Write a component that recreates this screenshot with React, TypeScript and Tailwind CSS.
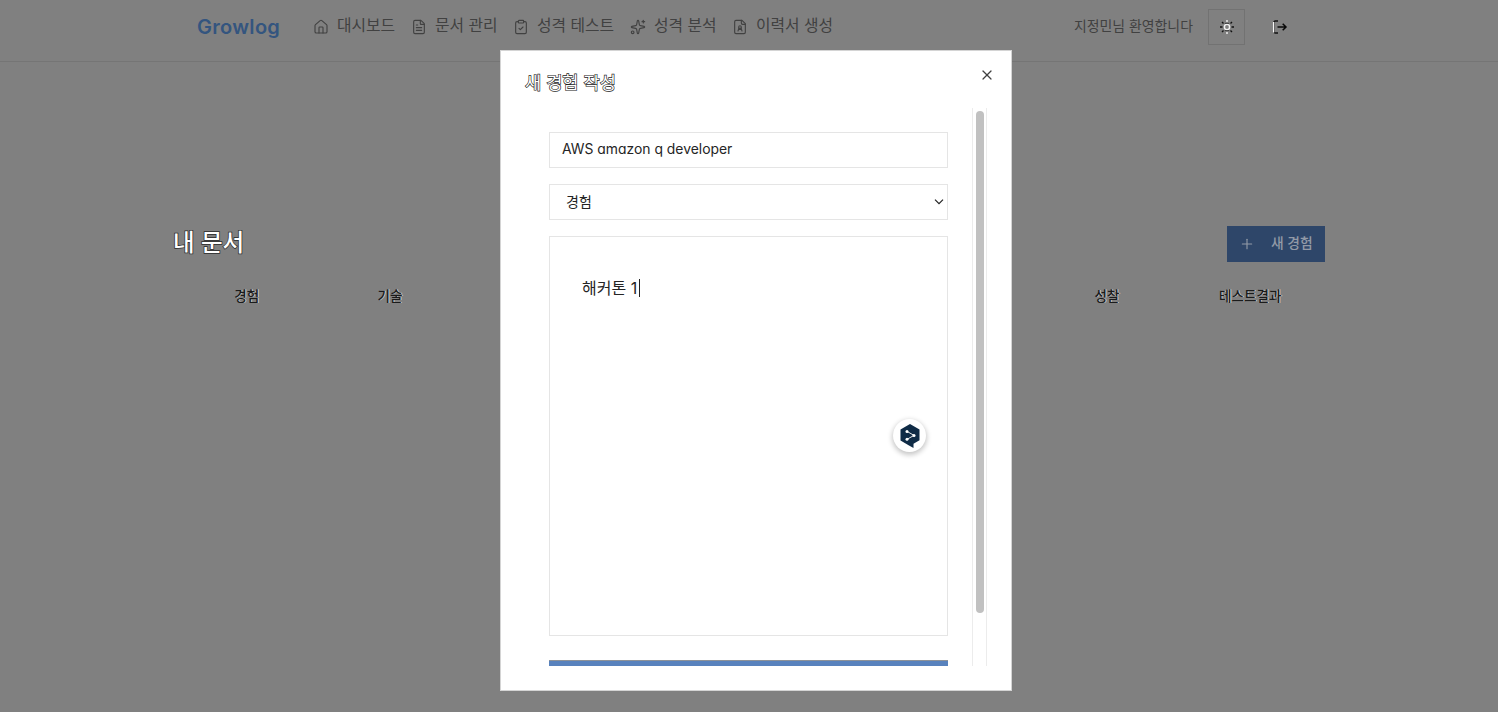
import React from "react";
import { House, FileText, ClipboardCheck, Sparkles, Plus, X } from "lucide-react";

const font = "font-['Inter','Noto_Sans_CJK_KR',sans-serif] [font-feature-settings:'cv11'] antialiased";

function NavItem({ icon, label, className }: { icon: React.ReactNode; label: string; className: string }) {
  return (
    <a className={`flex h-6 shrink-0 items-center gap-2 whitespace-nowrap text-[15.8px] leading-6 text-[#414141] ${className}`}>
      {icon}
      <span className="-mt-0.5">{label}</span>
    </a>
  );
}

function ResumeIcon() {
  return (
    <svg width="16" height="16" viewBox="0 0 24 24" fill="none" stroke="currentColor" strokeWidth="1.7" strokeLinecap="round" strokeLinejoin="round" className="shrink-0">
      <path d="M15 2H6a2 2 0 0 0-2 2v16a2 2 0 0 0 2 2h12a2 2 0 0 0 2-2V7Z" />
      <path d="M14 2v4a2 2 0 0 0 2 2h4" />
      <circle cx="12" cy="12.2" r="2" />
      <path d="M9 18l1.4-4.4M15 18l-1.4-4.4M10 15.8h4" />
    </svg>
  );
}

function SunIcon() {
  return (
    <svg width="16" height="16" viewBox="0 0 16 16" fill="none" strokeWidth="1.4">
      <circle cx="8" cy="8" r="2.6" stroke="#f2f2f2" />
      <path d="M8 1v2M8 13v2" stroke="#f2f2f2" />
      <path d="M1 8h2.5M12.5 8H15M3 3l1.5 1.5M11.5 11.5L13 13M3 13l1.5-1.5M11.5 4.5L13 3" stroke="#111" />
      <path d="M5.8 4.4h4.4M5.8 11.6h4.4" stroke="#222" strokeWidth="0.7" />
    </svg>
  );
}

function LogoutIcon() {
  return (
    <svg width="16" height="16" viewBox="0 0 16 16" fill="none" strokeWidth="1.3" className="ml-[27px] shrink-0">
      <path d="M6 2H3.3Q2 2 2 3.3v9.4Q2 14 3.3 14H6" stroke="#111" />
      <path d="M1.6 3v10.5" stroke="#f5f5f5" />
      <path d="M5.5 8H14M10.7 4.7L14 8l-3.3 3.3" stroke="#080808" strokeWidth="1.5" />
    </svg>
  );
}

function Header() {
  return (
    <header className="flex h-[62px] items-start border-b border-[#757575] pl-[197px]">
      <div className="mt-[13px] w-[116px] text-[20px] leading-7 font-semibold tracking-[0.3px] text-[#34557f]">Growlog</div>
      <nav className="mt-[15px] flex">
        <NavItem className="w-[98px]" icon={<House size={16} strokeWidth={1.7} />} label="대시보드" />
        <NavItem className="w-[102px]" icon={<FileText size={16} strokeWidth={1.7} />} label="문서 관리" />
        <NavItem className="w-[117px]" icon={<ClipboardCheck size={16} strokeWidth={1.7} />} label="성격 테스트" />
        <NavItem className="w-[102px]" icon={<Sparkles size={16} strokeWidth={1.7} />} label="성격 분석" />
        <NavItem className="w-[102px]" icon={<ResumeIcon />} label="이력서 생성" />
      </nav>
      <div className="mt-[9px] ml-[240px] flex h-9 items-center">
        <span className="-mt-0.5 w-[134px] shrink-0 text-[13.9px] whitespace-nowrap text-[#414141]">지정민님 환영합니다</span>
        <button className="flex h-9 w-[37px] items-center justify-center border border-[#727272]">
          <SunIcon />
        </button>
        <LogoutIcon />
      </div>
    </header>
  );
}

const tabs = ["경험", "기술", "", "", "", "", "성찰", "테스트결과"];

function Documents() {
  return (
    <main className="ml-[174px] w-[1151px] pt-[164px]">
      <div className="flex h-9 items-center justify-between">
        <h1 className="-mt-0.5 -ml-px text-[23.5px] leading-8 font-medium text-white [paint-order:stroke_fill] [-webkit-text-stroke:1.5px_#2a2a2a]">내 문서</h1>
        <button className="flex h-9 w-[98px] items-center bg-[#2e4669] pl-3 text-[13.8px] font-medium text-[#929aa7]">
          <Plus size={16} strokeWidth={1.7} />
          <span className="-mt-0.5 ml-4">새 경험</span>
        </button>
      </div>
      <div className="mt-4 ml-px grid h-9 w-[1147px] grid-cols-8 items-center text-center text-[13.6px] font-medium text-[#1b1b1b] [text-shadow:1px_0_#ccc]">
        {tabs.map((tab, i) => <span key={i}>{tab}</span>)}
      </div>
    </main>
  );
}

function TranslateBadge() {
  return (
    <div className="absolute top-[182px] left-[343px] flex size-[33px] items-center justify-center rounded-full bg-white shadow-[0_2px_5px_1px_rgba(0,0,0,0.22)]">
      <svg width="22" height="24" viewBox="0 0 22 24">
        <path d="M11 0 L20.5 5.4 V16.2 L14.5 19.7 V24 L10 21.6 L1.5 16.4 V5.4 Z" fill="#0f2b46" />
        <path d="M8 7.4 L15 11.4 L8 15.3" fill="none" stroke="#fff" strokeWidth="0.9" />
        <circle cx="8" cy="7.4" r="1.5" fill="#fff" />
        <circle cx="15" cy="11.4" r="1.5" fill="#fff" />
        <circle cx="8" cy="15.3" r="1.5" fill="#fff" />
      </svg>
    </div>
  );
}

function ExperienceDialog() {
  return (
    <section role="dialog" className="absolute top-[50px] left-[500px] flex h-[641px] w-[512px] flex-col border border-[#d4d4d4] bg-white text-[#252525]">
      <header className="flex h-[57px] justify-between pt-[16px] pr-4 pl-6">
        <h2 className="mt-[2px] text-[17.6px] leading-7 font-normal text-white [paint-order:stroke_fill] [-webkit-text-stroke:1.3px_#222]">새 경험 작성</h2>
        <X size={16} strokeWidth={1.8} className="text-[#404040]" />
      </header>
      <div className="flex h-[558px] pl-12">
        <form className="flex w-[399px] flex-col overflow-hidden pt-[24px]">
          <div className="flex h-9 shrink-0 items-center border border-[#e5e5e5] pb-0.5 pl-3 text-[13.9px]">AWS amazon q developer</div>
          <div className="mt-4 flex h-9 shrink-0 items-center justify-between border border-[#e5e5e5] pr-[3px] pl-4 text-[14px]">
            <span className="-mt-0.5">경험</span>
            <svg width="10" height="6" viewBox="0 0 10 6" fill="none" stroke="#222" strokeWidth="1.2">
              <path d="M1 0.7l4 4 4-4" />
            </svg>
          </div>
          <div className="relative mt-4 h-[400px] shrink-0 border border-[#e5e5e5] px-8 pt-[37px]">
            <p className="flex items-center text-[16px] leading-7">
              해커톤 1<span className="ml-[2px] h-[18px] w-px bg-[#222]" />
            </p>
            <TranslateBadge />
          </div>
          <button className="mt-6 h-9 shrink-0 border-t border-[#8d9299] bg-[#5882bd]" />
        </form>
        <div className="ml-6 w-[15px] border-x border-[#ececec] pt-[3px]">
          <div className="mx-auto h-[502px] w-2 rounded-full bg-[#c1c1c1]" />
        </div>
      </div>
    </section>
  );
}

export default function App() {
  return (
    <div className={`relative h-[712px] w-[1498px] overflow-hidden bg-[#808080] ${font}`}>
      <Header />
      <Documents />
      <ExperienceDialog />
    </div>
  );
}
